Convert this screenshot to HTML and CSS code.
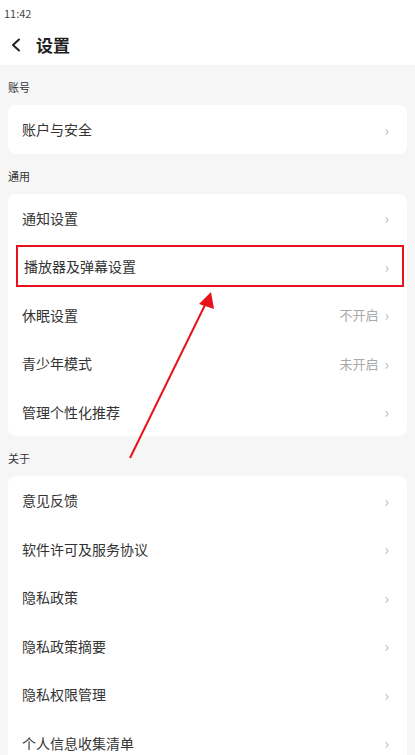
FILE: index.html
```html
<!DOCTYPE html>
<html lang="zh-CN">
<head>
    <meta charset="UTF-8">
    <meta name="viewport" content="width=device-width, initial-scale=1.0">
    <title>设置</title>
    <link rel="stylesheet" href="styles.css">
</head>
<body>
    <div class="status-bar">11:42</div>
    <div class="header">
        <svg class="back" width="12" height="14" viewBox="0 0 12 14">
            <path d="M9 1.5 L3 7 L9 12.5" fill="none" stroke="#222" stroke-width="2" stroke-linecap="round" stroke-linejoin="round"/>
        </svg>
        <span class="title">设置</span>
    </div>

    <div class="content">
        <div class="section-title">账号</div>
        <div class="card">
            <div class="row"><span class="label">账户与安全</span><span class="arrow">›</span></div>
        </div>

        <div class="section-title">通用</div>
        <div class="card">
            <div class="row"><span class="label">通知设置</span><span class="arrow">›</span></div>
            <div class="row highlight"><span class="label">播放器及弹幕设置</span><span class="arrow">›</span></div>
            <div class="row"><span class="label">休眠设置</span><span class="value">不开启</span><span class="arrow">›</span></div>
            <div class="row"><span class="label">青少年模式</span><span class="value">未开启</span><span class="arrow">›</span></div>
            <div class="row"><span class="label">管理个性化推荐</span><span class="arrow">›</span></div>
        </div>

        <div class="section-title">关于</div>
        <div class="card">
            <div class="row"><span class="label">意见反馈</span><span class="arrow">›</span></div>
            <div class="row"><span class="label">软件许可及服务协议</span><span class="arrow">›</span></div>
            <div class="row"><span class="label">隐私政策</span><span class="arrow">›</span></div>
            <div class="row"><span class="label">隐私政策摘要</span><span class="arrow">›</span></div>
            <div class="row"><span class="label">隐私权限管理</span><span class="arrow">›</span></div>
            <div class="row"><span class="label">个人信息收集清单</span><span class="arrow">›</span></div>
        </div>
    </div>

    <!-- annotation arrow pointing at the highlighted row -->
    <svg class="pointer" width="415" height="755" viewBox="0 0 415 755">
        <line x1="130" y1="458" x2="205" y2="305" stroke="#e8121b" stroke-width="2"/>
        <polygon points="211,292 199,304 214,309" fill="#e8121b"/>
    </svg>
</body>
</html>
```

FILE: styles.css
```css
* {
    margin: 0;
    padding: 0;
    box-sizing: border-box;
}
body {
    font-family: "Noto Sans CJK SC", "Noto Sans", sans-serif;
    background-color: #f6f6f6;
    color: #333;
    width: 415px;
    height: 755px;
    overflow: hidden;
    position: relative;
}
.status-bar {
    background: #fff;
    height: 27px;
    padding: 5px 0 0 4px;
    font-size: 11px;
    color: #444;
    line-height: 16px;
}
.header {
    background: #fff;
    height: 38px;
    display: flex;
    align-items: center;
    padding-left: 10px;
    padding-bottom: 3px;
    gap: 14px;
}
.header .title {
    font-size: 17px;
    font-weight: bold;
    color: #222;
}
.content {
    padding: 0 8px;
}
.section-title {
    font-size: 11px;
    color: #333;
    height: 40px;
    padding-top: 14px;
    line-height: 16px;
}
.card {
    background: #fff;
    border-radius: 8px;
}
.row {
    height: 48.5px;
    display: flex;
    align-items: center;
    padding: 0 18px 0 14px;
    font-size: 14px;
    color: #333;
}
.row .label {
    flex: 1;
}
.row .value {
    color: #aaa;
    font-size: 13px;
    margin-right: 6px;
}
.row .arrow {
    color: #bbb;
    font-size: 15px;
}
.row.highlight {
    border: 2px solid #e8121b;
    margin: 3px 3px 3.5px 8px;
    height: 42px;
    padding-left: 6px;
    padding-right: 13px;
}
.pointer {
    position: absolute;
    left: 0;
    top: 0;
    pointer-events: none;
}
```
